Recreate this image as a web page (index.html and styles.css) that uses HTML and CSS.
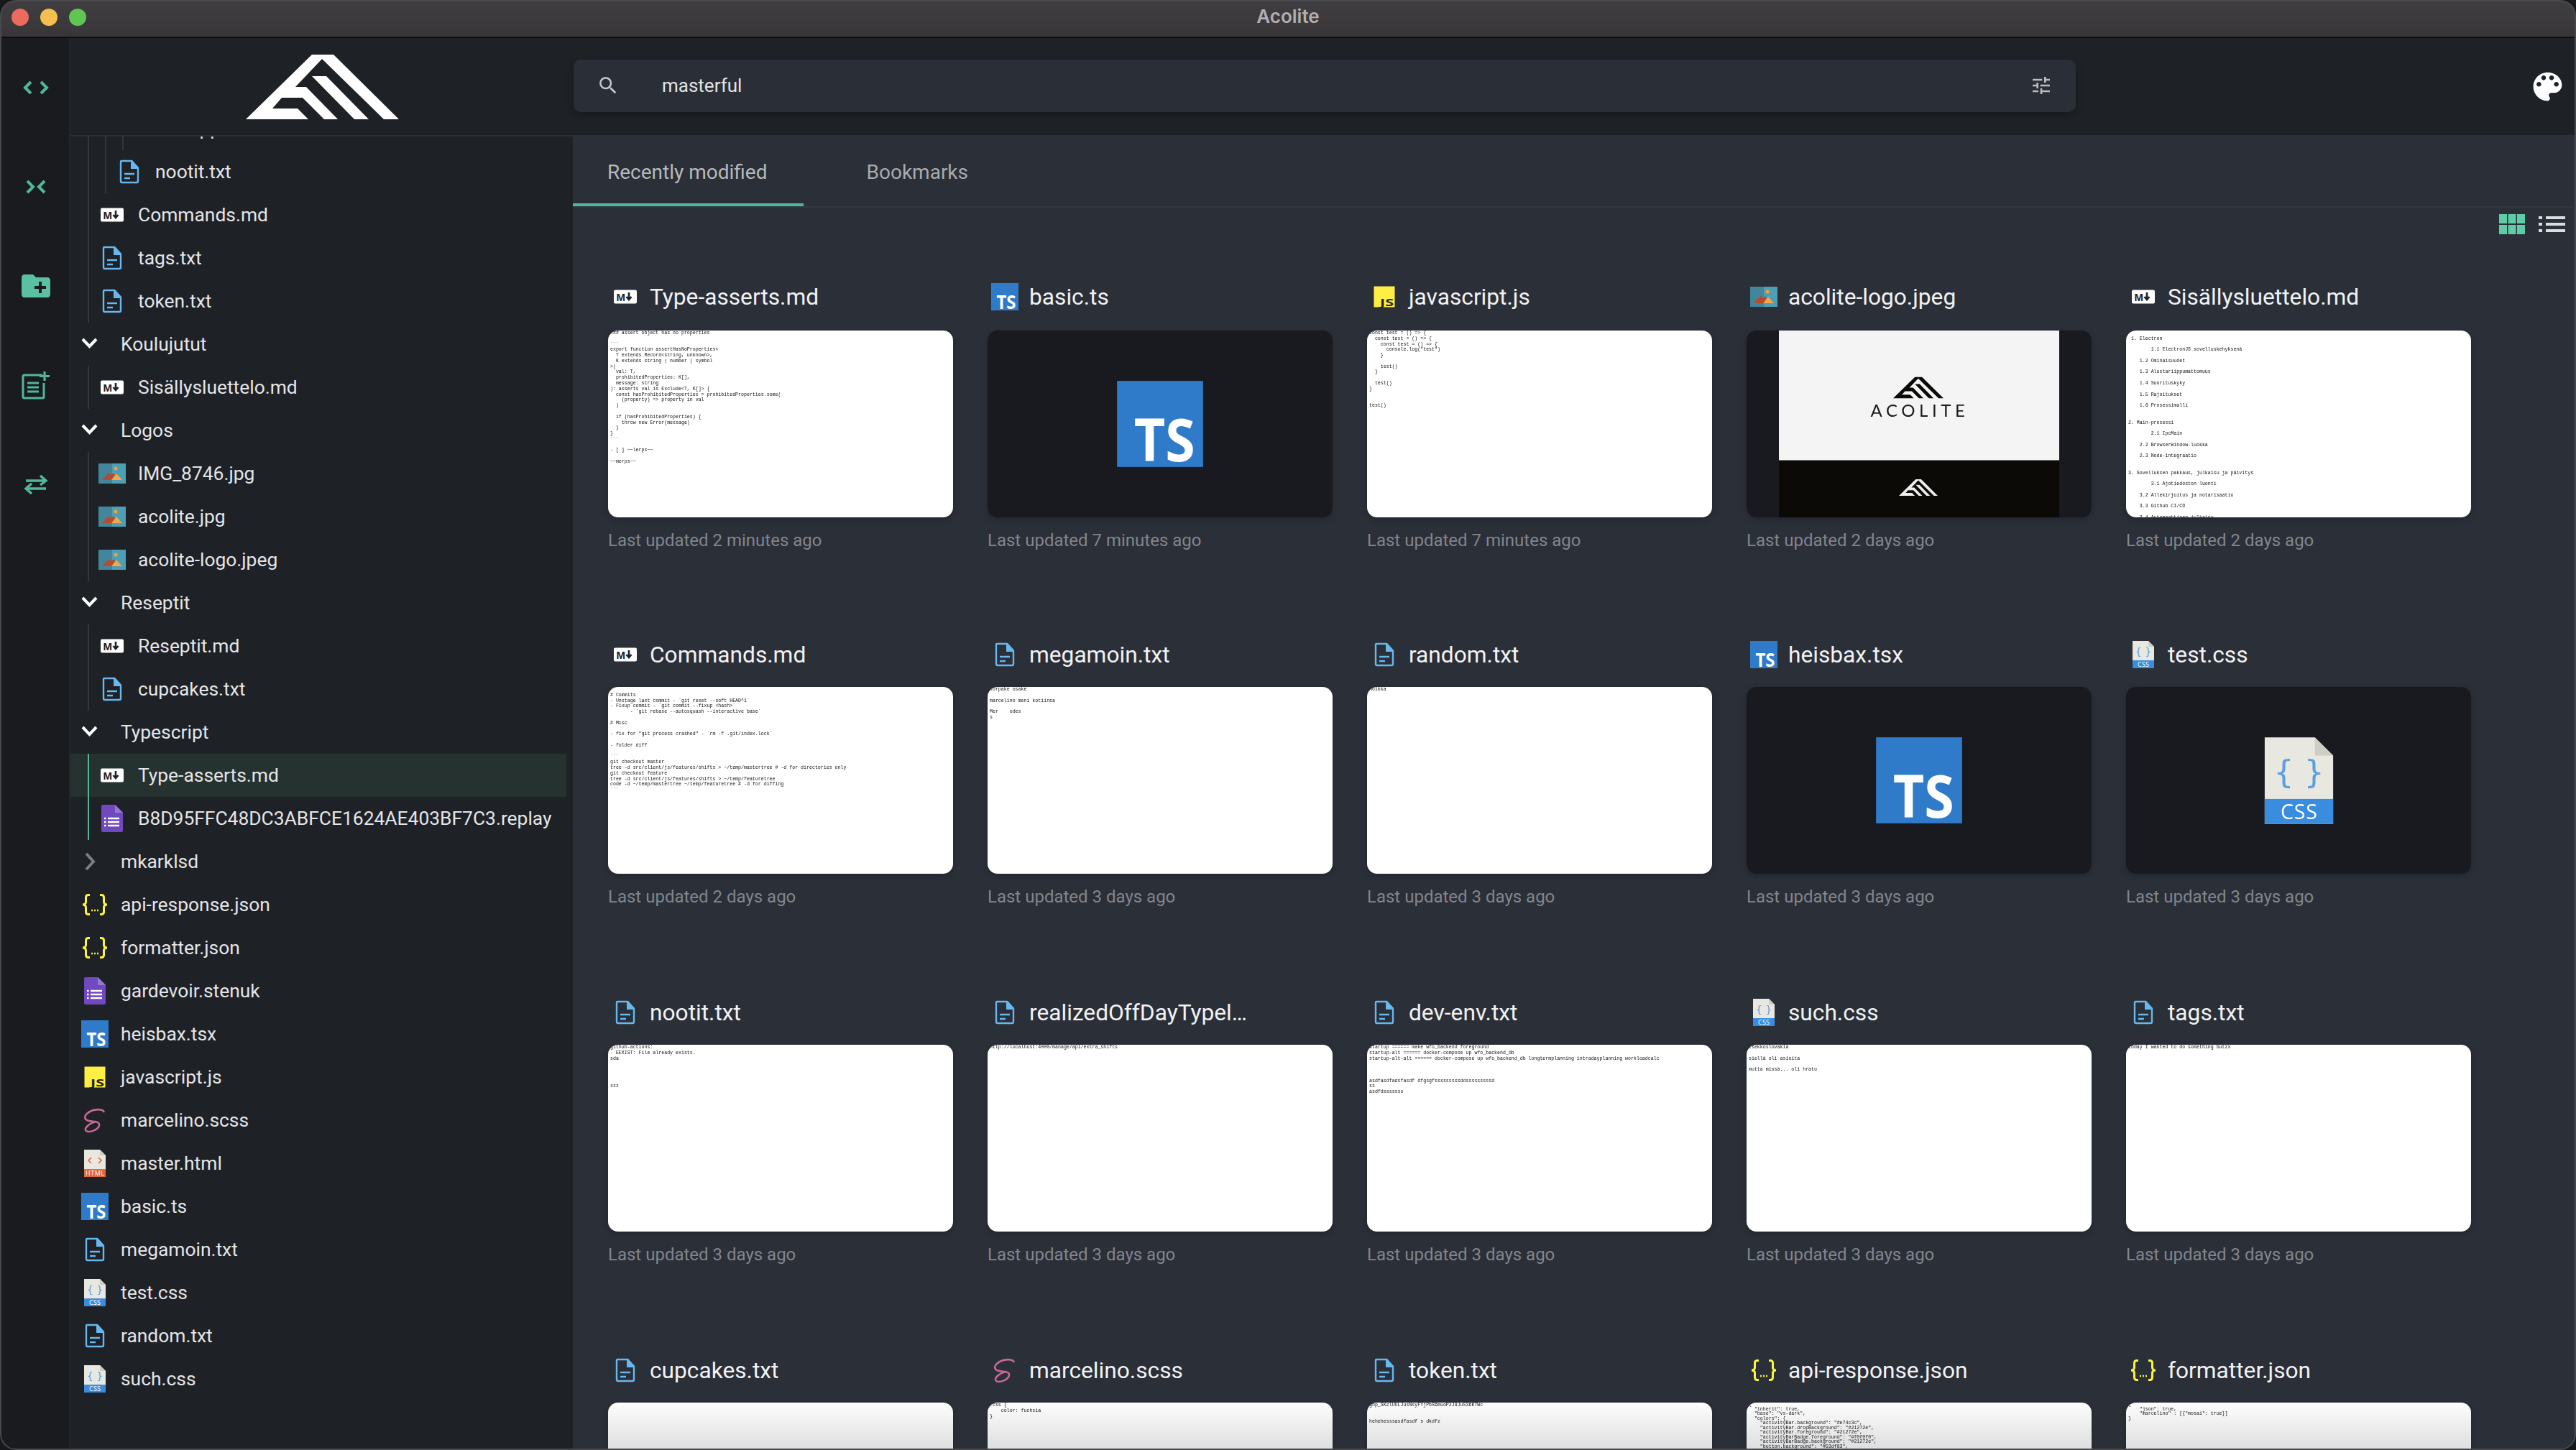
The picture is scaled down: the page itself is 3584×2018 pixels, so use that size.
FILE: index.html
```html
<!DOCTYPE html>
<html lang="en">
<head>
<meta charset="utf-8">
<title>Acolite</title>
<link rel="stylesheet" href="styles.css">
</head>
<body>
<svg class="defs" xmlns="http://www.w3.org/2000/svg">
  <symbol id="logomark" viewBox="342 74 213 90">
    <path d="M342 164 434 74H464L555 164H534L448 80 411 119H426L470 164H451L421 134H392L379 149H414L429 164Z"/>
    <path d="M434 104H454L513 164H493Z"/>
  </symbol>
  <symbol id="md" viewBox="0 0 40 40">
    <rect x="4" y="10.5" width="32" height="19" rx="2" fill="#fff"/>
    <text x="7.5" y="25.5" font-family="Liberation Sans" font-weight="700" font-size="15" fill="#1e2126">M</text>
    <path d="M25 14v9M21.5 20l3.5 4 3.500-4" fill="none" stroke="#1e2126" stroke-width="2.600"/>
  </symbol>
  <symbol id="txt" viewBox="0 0 40 40">
    <path d="M9 5H23L32 15V33a2 2 0 0 1-2 2H10a2 2 0 0 1-2-2V6a1 1 0 0 1 1-1Z" fill="none" stroke="#66b8ee" stroke-width="2.400"/>
    <path d="M22 4H24L33 14V16H22Z" fill="#66b8ee"/>
    <path d="M13 23H27M13 29H21" stroke="#66b8ee" stroke-width="2.400"/>
  </symbol>
  <symbol id="img" viewBox="0 0 40 40">
    <rect x="1" y="6" width="38" height="28" fill="#4e9fb6"/>
    <rect x="1" y="6" width="19" height="28" fill="#43869b"/>
    <path d="M6 29 15 19l4 3 3-3 6 10Z" fill="#b64b2e"/>
    <path d="M19 29 26 20l8 9Z" fill="#eca94e"/>
    <circle cx="25" cy="13" r="2.500" fill="#f0a23c"/>
  </symbol>
  <symbol id="ts" viewBox="0 0 40 40">
    <rect x="1" y="1" width="38" height="38" fill="#2f7bc9"/>
    <text x="8.500" y="36.500" font-family="Open Sans" font-weight="700" font-size="26" textLength="27" lengthAdjust="spacingAndGlyphs" fill="#fff">TS</text>
  </symbol>
  <symbol id="js" viewBox="0 0 40 40">
    <rect x="5.500" y="5.500" width="29" height="29" fill="#ffef45"/>
    <text x="14" y="33" font-family="Open Sans" font-weight="700" font-size="15" textLength="19" lengthAdjust="spacingAndGlyphs" fill="#26241a">JS</text>
  </symbol>
  <symbol id="json" viewBox="0 0 40 40">
    <path d="M13 6.500H11C8.500 6.500 7.500 8 7.500 10V16C7.500 18.500 6 20 3 20C6 20 7.500 21.500 7.500 24V30C7.500 32 8.500 33.500 11 33.500H13M27 6.500H29C31.500 6.500 32.500 8 32.500 10V16C32.500 18.500 34 20 37 20C34 20 32.500 21.500 32.500 24V30C32.500 32 31.500 33.500 29 33.500H27" fill="none" stroke="#fbf53a" stroke-width="3"/>
    <path d="M15 28h2M19 28h2M23 28h2" stroke="#fbf53a" stroke-width="2.400"/>
  </symbol>
  <symbol id="form" viewBox="0 0 40 40">
    <path d="M7 1H24L35 12V37a2 2 0 0 1-2 2H7a2 2 0 0 1-2-2V3a2 2 0 0 1 2-2Z" fill="#7049bf"/>
    <path d="M24 1 35 12H24Z" fill="#9478d4"/>
    <path d="M14 20H30M14 25H30M14 30H30" stroke="#fff" stroke-width="2.400"/>
    <path d="M9 20h2.500M9 25h2.500M9 30h2.500" stroke="#fff" stroke-width="2.400"/>
  </symbol>
  <symbol id="scss" viewBox="0 0 40 40">
    <path d="M33 9C31 4 20 4 13 8 6 12 4 17 9 20 15 23 27 20 26 27 25 33 13 38 8 35 4 32 11 25 21 22" fill="none" stroke="#c6689a" stroke-width="2.600"/>
  </symbol>
  <symbol id="html" viewBox="0 0 40 40">
    <path d="M5 1H27L35 9V39H5Z" fill="#e9e8e0"/>
    <path d="M27 1 35 9H27Z" fill="#cfcec6"/>
    <rect x="5" y="28" width="30" height="11" fill="#e2673a"/>
    <text x="20" y="37" text-anchor="middle" font-family="Open Sans" font-size="9" textLength="26" fill="#fff">HTML</text>
    <path d="M15 12l-4 4 4 4M25 12l4 4-4 4" fill="none" stroke="#e2673a" stroke-width="1.600"/>
  </symbol>
  <symbol id="css" viewBox="0 0 40 40">
    <path d="M5 1H27L35 9V39H5Z" fill="#e9e8e0"/>
    <path d="M27 1 35 9H27Z" fill="#cfcec6"/>
    <rect x="5" y="28" width="30" height="11" fill="#3a8dde"/>
    <text x="20" y="37" text-anchor="middle" font-family="Open Sans" font-size="9" textLength="16" fill="#fff">CSS</text>
    <text x="20" y="21" text-anchor="middle" font-family="DejaVu Sans" font-size="14" fill="#5a9fe0">{ }</text>
  </symbol>
  <symbol id="down" viewBox="0 0 40 40">
    <path d="M3 13 12.500 23 22 13" fill="none" stroke="#fff" stroke-width="4"/>
  </symbol>
  <symbol id="right" viewBox="0 0 40 40">
    <path d="M8 9 18 20 8 31" fill="none" stroke="#7d7e80" stroke-width="4"/>
  </symbol>
</svg>

<div class="window">
  <header class="titlebar">
    <div class="lights"><i class="light red"></i><i class="light amber"></i><i class="light green"></i></div>
    <div class="apptitle">Acolite</div>
  </header>
  <div class="body">
    <nav class="activity">
      <svg class="act" viewBox="0 0 40 40"><path d="M13 12 5 20 13 28M27 12 35 20 27 28" fill="none" stroke="#4fb89b" stroke-width="4"/></svg>
      <svg class="act" viewBox="0 0 40 40"><path d="M8 12 16 20 8 28M32 12 24 20 32 28" fill="none" stroke="#4fb89b" stroke-width="4"/></svg>
      <svg class="act" viewBox="4 4 40 40"><path transform="scale(2)" d="M20 6h-8l-2-2H4c-1.110 0-1.990.89-1.990 2L2 18c0 1.110.89 2 2 2h16c1.110 0 2-.89 2-2V8c0-1.110-.89-2-2-2zm-1 8h-3v3h-2v-3h-3v-2h3V9h2v3h3v2z" fill="#5bc0a1"/></svg>
      <svg class="act" viewBox="0 0 40 40"><path d="M29 6H4a2 2 0 0 0-2 2V36a2 2 0 0 0 2 2H29a2 2 0 0 0 2-2V17" fill="none" stroke="#4fb89b" stroke-width="3"/><path d="M8 17H24M8 23H24M8 29H24M32 1V14M25 7.500H39" fill="none" stroke="#4fb89b" stroke-width="3.200"/></svg>
      <svg class="act" viewBox="0 0 40 40"><path d="M6 15H32M26 8 34 15 26 21M34 26H8M14 19 6 26 14 33" fill="none" stroke="#4fb89b" stroke-width="3.400"/></svg>
    </nav>
    <div class="content">
      <div class="topbar">
        <div class="logoslot"><svg class="toplogo"><use href="#logomark"/></svg></div>
        <div class="search">
          <svg class="searchic" viewBox="0 0 24 24"><path d="M15.500 14h-.79l-.28-.27A6.470 6.470 0 0 0 16 9.500 6.500 6.500 0 1 0 9.500 16c1.610 0 3.090-.59 4.230-1.570l.27.28v.79l5 4.990L20.490 19l-4.990-5zm-6 0C7.010 14 5 11.990 5 9.500S7.010 5 9.500 5 14 7.010 14 9.500 11.990 14 9.500 14z"/></svg>
          <span class="searchtext">masterful</span>
          <svg class="tune" viewBox="0 0 24 24"><path d="M3 17v2h6v-2H3zM3 5v2h10V5H3zm10 16v-2h8v-2h-8v-2h-2v6h2zM7 9v2H3v2h4v2h2V9H7zm14 4v-2H11v2h10zm-6-4h2V7h4V5h-4V3h-2v6z"/></svg>
        </div>
        <svg class="palette" viewBox="0 0 24 24"><path d="M12 3c-4.970 0-9 4.030-9 9s4.030 9 9 9c.83 0 1.500-.67 1.500-1.500 0-.39-.15-.74-.39-1.010-.23-.26-.38-.61-.38-.99 0-.83.67-1.500 1.500-1.500H16c2.760 0 5-2.240 5-5 0-4.420-4.030-8-9-8zm-5.500 9c-.83 0-1.500-.67-1.500-1.500S5.670 9 6.500 9 8 9.670 8 10.500 7.330 12 6.500 12zm3-4C8.670 8 8 7.330 8 6.500S8.670 5 9.500 5s1.500.67 1.500 1.500S10.330 8 9.500 8zm5 0c-.83 0-1.500-.67-1.500-1.500S13.670 5 14.500 5s1.500.67 1.500 1.500S15.330 8 14.500 8zm3 4c-.83 0-1.500-.67-1.500-1.500S16.670 9 17.500 9s1.500.67 1.500 1.500-.67 1.500-1.500 1.500z"/></svg>
      </div>
      <div class="panes">
        <aside class="tree">
          <div class="treeinner">
            <div class="group g1">
              <div class="group g2">
                <div class="group g3">
                  <div class="row d3"><svg class="ic"><use href="#down"/></svg><span>mappi</span></div>
                </div>
                <div class="row d2"><svg class="ic"><use href="#txt"/></svg><span>nootit.txt</span></div>
              </div>
              <div class="row d1"><svg class="ic"><use href="#md"/></svg><span>Commands.md</span></div>
              <div class="row d1"><svg class="ic"><use href="#txt"/></svg><span>tags.txt</span></div>
              <div class="row d1"><svg class="ic"><use href="#txt"/></svg><span>token.txt</span></div>
            </div>
            <div class="row"><svg class="ic"><use href="#down"/></svg><span>Koulujutut</span></div>
            <div class="group g1">
              <div class="row d1"><svg class="ic"><use href="#md"/></svg><span>Sisällysluettelo.md</span></div>
            </div>
            <div class="row"><svg class="ic"><use href="#down"/></svg><span>Logos</span></div>
            <div class="group g1">
              <div class="row d1"><svg class="ic"><use href="#img"/></svg><span>IMG_8746.jpg</span></div>
              <div class="row d1"><svg class="ic"><use href="#img"/></svg><span>acolite.jpg</span></div>
              <div class="row d1"><svg class="ic"><use href="#img"/></svg><span>acolite-logo.jpeg</span></div>
            </div>
            <div class="row"><svg class="ic"><use href="#down"/></svg><span>Reseptit</span></div>
            <div class="group g1">
              <div class="row d1"><svg class="ic"><use href="#md"/></svg><span>Reseptit.md</span></div>
              <div class="row d1"><svg class="ic"><use href="#txt"/></svg><span>cupcakes.txt</span></div>
            </div>
            <div class="row"><svg class="ic"><use href="#down"/></svg><span>Typescript</span></div>
            <div class="group g1 active">
              <div class="row d1 selected"><svg class="ic"><use href="#md"/></svg><span>Type-asserts.md</span></div>
              <div class="row d1"><svg class="ic"><use href="#form"/></svg><span>B8D95FFC48DC3ABFCE1624AE403BF7C3.replay</span></div>
            </div>
            <div class="row"><svg class="ic"><use href="#right"/></svg><span>mkarklsd</span></div>
            <div class="row"><svg class="ic"><use href="#json"/></svg><span>api-response.json</span></div>
            <div class="row"><svg class="ic"><use href="#json"/></svg><span>formatter.json</span></div>
            <div class="row"><svg class="ic"><use href="#form"/></svg><span>gardevoir.stenuk</span></div>
            <div class="row"><svg class="ic"><use href="#ts"/></svg><span>heisbax.tsx</span></div>
            <div class="row"><svg class="ic"><use href="#js"/></svg><span>javascript.js</span></div>
            <div class="row"><svg class="ic"><use href="#scss"/></svg><span>marcelino.scss</span></div>
            <div class="row"><svg class="ic"><use href="#html"/></svg><span>master.html</span></div>
            <div class="row"><svg class="ic"><use href="#ts"/></svg><span>basic.ts</span></div>
            <div class="row"><svg class="ic"><use href="#txt"/></svg><span>megamoin.txt</span></div>
            <div class="row"><svg class="ic"><use href="#css"/></svg><span>test.css</span></div>
            <div class="row"><svg class="ic"><use href="#txt"/></svg><span>random.txt</span></div>
            <div class="row"><svg class="ic"><use href="#css"/></svg><span>such.css</span></div>
          </div>
        </aside>
        <main class="main">
          <div class="tabs">
            <div class="tab current">Recently modified</div>
            <div class="tab">Bookmarks</div>
          </div>
          <div class="viewtoggle">
            <svg class="gridicon" viewBox="0 0 36 28"><path d="M0 0h11v13H0zM12.500 0h11v13h-11zM25 0h11v13H25zM0 15h11v13H0zM12.500 15h11v13h-11zM25 15h11v13H25z"/></svg>
            <svg class="listicon" viewBox="0 0 37 28"><path d="M0 3h5v4H0zM10 3h27v4H10zM0 12h5v4H0zM10 12h27v4H10zM0 21h5v4H0zM10 21h27v4H10z"/></svg>
          </div>
          <div class="grid">
            <article class="card">
              <h3 class="cardtitle"><svg class="ic"><use href="#md"/></svg><span>Type-asserts.md</span></h3>
              <pre class="thumb">### assert object has no properties

&#96;&#96;&#96;
export function assertHasNoProperties&lt;
  T extends Record&lt;string, unknown&gt;,
  K extends string | number | symbol
&gt;(
  val: T,
  prohibitedProperties: K[],
  message: string
): asserts val is Exclude&lt;T, K[]&gt; {
  const hasProhibitedProperties = prohibitedProperties.some(
    (property) =&gt; property in val
  )

  if (hasProhibitedProperties) {
    throw new Error(message)
  }
}
&#96;&#96;&#96;

- [ ] ~~lerps~~

~~merps~~</pre>
              <p class="caption">Last updated 2 minutes ago</p>
            </article>
            <article class="card">
              <h3 class="cardtitle"><svg class="ic"><use href="#ts"/></svg><span>basic.ts</span></h3>
              <div class="thumb dark"><svg class="bigts"><use href="#ts"/></svg></div>
              <p class="caption">Last updated 7 minutes ago</p>
            </article>
            <article class="card">
              <h3 class="cardtitle"><svg class="ic"><use href="#js"/></svg><span>javascript.js</span></h3>
              <pre class="thumb">const test = () =&gt; {
  const test = () =&gt; {
    const test = () =&gt; {
      console.log("test")
    }

    test()
  }

  test()
}


test()</pre>
              <p class="caption">Last updated 7 minutes ago</p>
            </article>
            <article class="card">
              <h3 class="cardtitle"><svg class="ic"><use href="#img"/></svg><span>acolite-logo.jpeg</span></h3>
              <div class="thumb dark">
                <div class="brand">
                  <div class="brandlight"><svg class="brandmark"><use href="#logomark"/></svg><span class="brandname">ACOLITE</span></div>
                  <div class="branddark"><svg class="brandsmall"><use href="#logomark"/></svg></div>
                </div>
              </div>
              <p class="caption">Last updated 2 days ago</p>
            </article>
            <article class="card">
              <h3 class="cardtitle"><svg class="ic"><use href="#md"/></svg><span>Sisällysluettelo.md</span></h3>
              <pre class="thumb">

 1. Electron

        1.1 ElectronJS sovelluskehyksenä

    1.2 Ominaisuudet

    1.3 Alustariippumattomuus

    1.4 Suorituskyky

    1.5 Rajoitukset

    1.6 Prosessimalli


2. Main-prosessi

        2.1 IpcMain

    2.2 BrowserWindow-luokka

    2.3 Node-integraatio


3. Sovelluksen pakkaus, julkaisu ja päivitys

        3.1 Ajotiedoston luonti

    3.2 Allekirjoitus ja notarisaatio

    3.3 Github CI/CD

    3.4 Automaattinen julkaisu</pre>
              <p class="caption">Last updated 2 days ago</p>
            </article>

            <article class="card">
              <h3 class="cardtitle"><svg class="ic"><use href="#md"/></svg><span>Commands.md</span></h3>
              <pre class="thumb">

# Commits
- Unstage last commit - `git reset --soft HEAD^1`
- Fixup commit - `git commit --fixup &lt;hash&gt;`
       - `git rebase --autosquash --interactive base`

# Misc

- fix for "git process crashed" - `rm -f .git/index.lock`

- folder diff

&#96;&#96;&#96;
git checkout master
tree -d src/client/js/features/shifts &gt; ~/temp/mastertree # -d for directories only
git checkout feature
tree -d src/client/js/features/shifts &gt; ~/temp/featuretree
code -d ~/temp/mastertree ~/temp/featuretree # -d for diffing
&#96;&#96;&#96;</pre>
              <p class="caption">Last updated 2 days ago</p>
            </article>
            <article class="card">
              <h3 class="cardtitle"><svg class="ic"><use href="#txt"/></svg><span>megamoin.txt</span></h3>
              <pre class="thumb">lorpake osake

marcelino meni kotiinsa

Mer    odes
s</pre>
              <p class="caption">Last updated 3 days ago</p>
            </article>
            <article class="card">
              <h3 class="cardtitle"><svg class="ic"><use href="#txt"/></svg><span>random.txt</span></h3>
              <pre class="thumb">Moikka</pre>
              <p class="caption">Last updated 3 days ago</p>
            </article>
            <article class="card">
              <h3 class="cardtitle"><svg class="ic"><use href="#ts"/></svg><span>heisbax.tsx</span></h3>
              <div class="thumb dark"><svg class="bigts"><use href="#ts"/></svg></div>
              <p class="caption">Last updated 3 days ago</p>
            </article>
            <article class="card">
              <h3 class="cardtitle"><svg class="ic"><use href="#css"/></svg><span>test.css</span></h3>
              <div class="thumb dark"><svg class="bigcss"><use href="#css"/></svg></div>
              <p class="caption">Last updated 3 days ago</p>
            </article>

            <article class="card">
              <h3 class="cardtitle"><svg class="ic"><use href="#txt"/></svg><span>nootit.txt</span></h3>
              <pre class="thumb">github-actions:
- EEXIST: File already exists.
sda




ssz</pre>
              <p class="caption">Last updated 3 days ago</p>
            </article>
            <article class="card">
              <h3 class="cardtitle"><svg class="ic"><use href="#txt"/></svg><span>realizedOffDayTypel…</span></h3>
              <pre class="thumb">http://localhost:4000/manage/api/extra_shifts</pre>
              <p class="caption">Last updated 3 days ago</p>
            </article>
            <article class="card">
              <h3 class="cardtitle"><svg class="ic"><use href="#txt"/></svg><span>dev-env.txt</span></h3>
              <pre class="thumb">startup ====== make wfo_backend foreground
startup-alt ====== docker-compose up wfo_backend_db
startup-alt-alt ====== docker-compose up wfo_backend_db longtermplanning intradayplanning workloadcalc



asdfasdfadsfasdf dfgsgfsssssssssddsssssssssd
ss
asdfdsssssss</pre>
              <p class="caption">Last updated 3 days ago</p>
            </article>
            <article class="card">
              <h3 class="cardtitle"><svg class="ic"><use href="#css"/></svg><span>such.css</span></h3>
              <pre class="thumb">tsekkoslovakia

siellä oli asioita

mutta missä... oli hratu</pre>
              <p class="caption">Last updated 3 days ago</p>
            </article>
            <article class="card">
              <h3 class="cardtitle"><svg class="ic"><use href="#txt"/></svg><span>tags.txt</span></h3>
              <pre class="thumb">today I wanted to do something butzx</pre>
              <p class="caption">Last updated 3 days ago</p>
            </article>

            <article class="card">
              <h3 class="cardtitle"><svg class="ic"><use href="#txt"/></svg><span>cupcakes.txt</span></h3>
              <div class="thumb"></div>
              <p class="caption">Last updated 3 days ago</p>
            </article>
            <article class="card">
              <h3 class="cardtitle"><svg class="ic"><use href="#scss"/></svg><span>marcelino.scss</span></h3>
              <pre class="thumb">.css {
    color: fuchsia
}</pre>
              <p class="caption">Last updated 3 days ago</p>
            </article>
            <article class="card">
              <h3 class="cardtitle"><svg class="ic"><use href="#txt"/></svg><span>token.txt</span></h3>
              <pre class="thumb">ghp_SKzlUULJusNsyFYjPbS6muoP2J8JuS36KTWc


hehehesssasdfasdf s dkdfz</pre>
              <p class="caption">Last updated 3 days ago</p>
            </article>
            <article class="card">
              <h3 class="cardtitle"><svg class="ic"><use href="#json"/></svg><span>api-response.json</span></h3>
              <pre class="thumb tight">{
  "inherit": true,
  "base": "vs-dark",
  "colors": {
    "activityBar.background": "#e74c3c",
    "activityBar.dropBackground": "#21272e",
    "activityBar.foreground": "#21272e",
    "activityBarBadge.foreground": "#f0f0f0",
    "activityBarBadge.background": "#21272e",
    "button.background": "#53df83",</pre>
              <p class="caption">Last updated 3 days ago</p>
            </article>
            <article class="card">
              <h3 class="cardtitle"><svg class="ic"><use href="#json"/></svg><span>formatter.json</span></h3>
              <pre class="thumb tight">{
    "json": true,
    "marcelino" : [{"mosai": true}]
}</pre>
              <p class="caption">Last updated 3 days ago</p>
            </article>
          </div>
        </main>
      </div>
    </div>
  </div>
</div>
</body>
</html>
```

FILE: styles.css
```css
* { box-sizing: border-box; }
html, body { margin: 0; width: 3584px; height: 2018px; overflow: hidden; background: #17181b; }
.defs { display: none; }

.window {
  position: relative;
  width: 3584px;
  height: 2018px;
  display: flex;
  flex-direction: column;
  overflow: hidden;
  border-radius: 22px;
  font-family: Roboto, "Liberation Sans", sans-serif;
}
.window::after {
  content: "";
  position: absolute;
  inset: 0;
  border: 2px solid #48494d;
  border-radius: 22px;
  pointer-events: none;
}

/* title bar */
.titlebar {
  position: relative;
  flex: 0 0 53px;
  display: flex;
  align-items: center;
  justify-content: center;
  background: linear-gradient(#403e41, #383639);
  border-bottom: 2px solid #0d0d0e;
}
.lights {
  position: absolute;
  left: 16px;
  top: 12px;
  display: flex;
  gap: 16px;
}
.light { width: 24px; height: 24px; border-radius: 50%; display: block; }
.red { background: #ec6a5e; }
.amber { background: #f4bf4f; }
.green { background: #61c554; }
.apptitle {
  font-family: Inter, sans-serif;
  font-weight: 600;
  font-size: 26px;
  color: #b0afb1;
  margin-top: -6px;
}

/* body */
.body { flex: 1; display: flex; min-height: 0; }
.activity {
  flex: 0 0 98px;
  display: flex;
  flex-direction: column;
  align-items: center;
  gap: 98px;
  padding: 49px 0 0 3px;
  background: #191b1f;
  border-right: 2px solid #24272b;
}
.act { width: 40px; height: 40px; display: block; }

.content { flex: 1; display: flex; flex-direction: column; min-width: 0; }
.topbar {
  flex: 0 0 135px;
  display: flex;
  align-items: center;
  background: #1e2126;
}
.logoslot { flex: 0 0 700px; display: flex; justify-content: center; }
.toplogo { width: 213px; height: 90px; fill: #fff; display: block; }
.search {
  width: 2090px;
  height: 73px;
  margin-top: -3px;
  padding: 0 32px 0 32px;
  display: flex;
  align-items: center;
  background: #2a2e37;
  border-radius: 10px;
  box-shadow: 0 4px 10px rgba(0, 0, 0, .25);
}
.searchic { width: 32px; height: 32px; fill: #c3c5c8; flex: none; }
.searchtext { margin-left: 59px; flex: 1; font-size: 26px; color: #e2e3e5; }
.tune { width: 32px; height: 32px; fill: #bcbdc0; flex: none; }
.palette { width: 53px; height: 53px; fill: #fff; margin-left: auto; margin-right: 13px; margin-top: -1px; flex: none; }

.panes { flex: 1; display: flex; min-height: 0; }

/* tree */
.tree {
  flex: 0 0 699px;
  overflow: hidden;
  background: #1e2126;
  border-top: 2px solid #2b2f38;
}
.treeinner { margin-top: -41px; padding-right: 9px; }
.row {
  height: 60px;
  display: flex;
  align-items: center;
  gap: 16px;
  padding-left: 14px;
  font-size: 26.400px;
  color: #e4e5e7;
  white-space: nowrap;
}
.d1 { padding-left: 38px; }
.d2 { padding-left: 62px; }
.d3 { padding-left: 86px; }
.selected { background: #25322f; }
.ic { width: 40px; height: 40px; flex: none; display: block; }
.group { position: relative; }
.group::before {
  content: "";
  position: absolute;
  top: 0;
  bottom: 0;
  width: 2px;
  background: #33373c;
}
.g1::before { left: 24px; }
.g2::before { left: 48px; }
.g3::before { left: 72px; }
.active::before { background: #4fb89b; }

/* main */
.main {
  position: relative;
  flex: 1;
  min-width: 0;
  overflow: hidden;
  background: #2b2f38;
}
.main::after {
  content: "";
  position: absolute;
  left: 0;
  right: 0;
  bottom: 0;
  height: 70px;
  background: linear-gradient(rgba(43, 47, 56, 0), rgba(43, 47, 56, .16));
  pointer-events: none;
}
.tabs {
  height: 101px;
  display: flex;
  gap: 40px;
  border-bottom: 2px solid #343842;
}
.tab {
  height: 99px;
  padding: 3px 48px 0;
  display: flex;
  align-items: center;
  font-size: 28px;
  color: #a8aaae;
}
.current {
  padding: 7px 50px 0 48px;
  color: #b6b8bb;
  border-bottom: 4px solid #4fb89b;
}
.viewtoggle {
  display: flex;
  justify-content: flex-end;
  align-items: center;
  gap: 19px;
  padding: 9px 15px 0 0;
}
.gridicon { width: 36px; height: 28px; fill: #5fcca8; display: block; }
.listicon { width: 37px; height: 28px; fill: #dcdde0; display: block; }

.grid {
  display: grid;
  grid-template-columns: repeat(5, 480px);
  grid-auto-rows: 498px;
  column-gap: 48px;
  padding: 67px 0 0 49px;
}
.card { min-width: 0; }
.cardtitle {
  margin: 0 0 25px;
  height: 40px;
  padding-left: 4px;
  display: flex;
  align-items: center;
  gap: 14px;
  font-size: 31.700px;
  font-weight: 400;
  color: #f1f2f3;
  white-space: nowrap;
}
.card:nth-child(-n+5) .cardtitle { margin-bottom: 27px; }
.caption {
  margin: 18px 0 0;
  font-size: 24px;
  line-height: 28px;
  color: #82858c;
}
.thumb {
  margin: 0;
  width: 480px;
  height: 260px;
  padding: 0 0 0 3px;
  overflow: hidden;
  border-radius: 14px;
  background: #fff;
  color: #111;
  font-family: "Liberation Mono", monospace;
  font-size: 6.600px;
  line-height: 7.780px;
  white-space: pre;
  box-shadow: 0 3px 8px rgba(0, 0, 0, .22);
  filter: blur(.2px);
}
.tight { line-height: 6.500px; }
.dark {
  padding: 0;
  display: flex;
  align-items: center;
  justify-content: center;
  background: #181a1f;
}
.bigts { width: 126px; height: 126px; display: block; }
.bigcss { width: 127px; height: 127px; display: block; }

.brand { width: 390px; height: 260px; display: flex; flex-direction: column; }
.brandlight {
  flex: 0 0 181px;
  display: flex;
  flex-direction: column;
  align-items: center;
  padding-top: 64px;
  background: #f4f4f4;
  border-bottom: 1px solid #888;
}
.brandmark { width: 70px; height: 31px; fill: #0b0a07; display: block; margin-left: -2px; }
.brandname {
  margin-top: 2px;
  margin-left: 2px;
  font-family: Lato, sans-serif;
  font-size: 24px;
  line-height: 28px;
  letter-spacing: 5.600px;
  color: #1a1a1a;
}
.branddark {
  flex: 1;
  display: flex;
  justify-content: center;
  padding-top: 26px;
  background: #0b0a07;
}
.brandsmall { width: 54px; height: 23px; fill: #eee; display: block; margin-left: -2px; }
```
